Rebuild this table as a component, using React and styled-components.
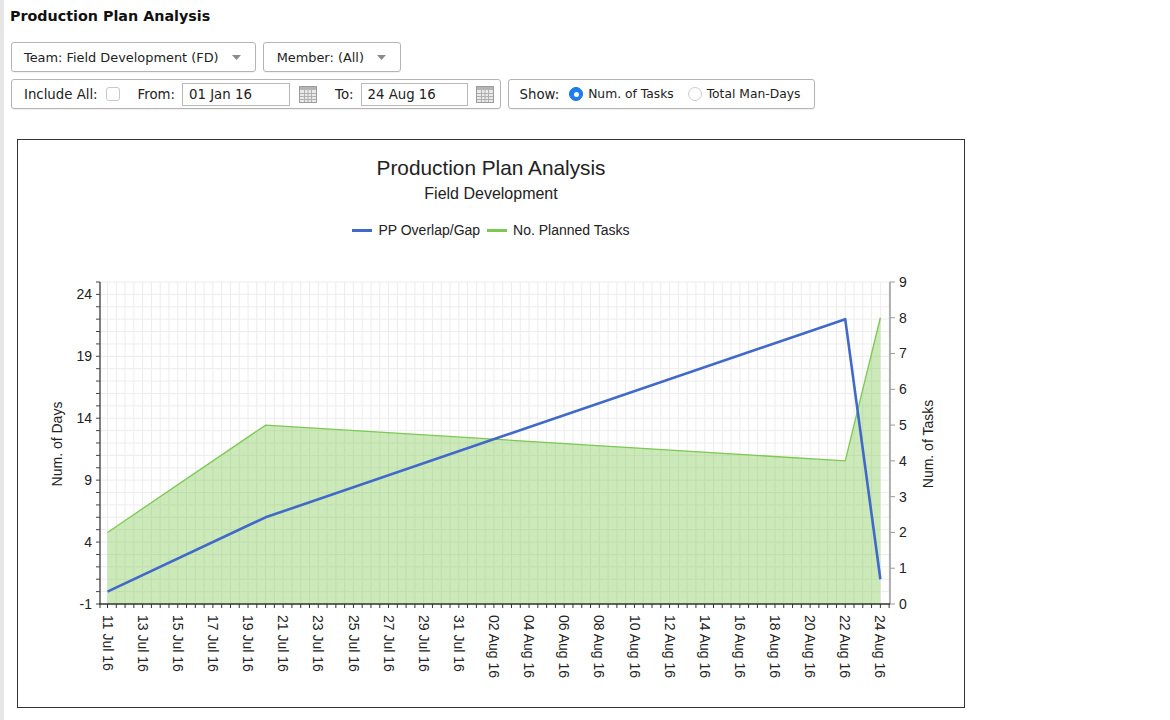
import styled, { createGlobalStyle } from 'styled-components';

const GlobalStyle = createGlobalStyle`
  html, body {
    margin: 0;
    padding: 0;
    background: #fff;
  }
  body {
    font-family: "DejaVu Sans", Verdana, sans-serif;
    color: #222;
  }
`;

const Page = styled.div`
  min-height: 720px;
  border-left: 4px solid #e6e6e6;
  padding: 8px 0 0 6px;
  box-sizing: border-box;
`;

const Heading = styled.h1`
  margin: 0;
  font-size: 14.3px;
  line-height: 16px;
  font-weight: bold;
  color: #111;
`;

const FilterRow = styled.div`
  display: flex;
  gap: 7px;
  margin-left: 1px;
  margin-top: ${(p) => p.$top}px;
`;

const FilterBox = styled.div`
  display: flex;
  align-items: center;
  height: 30px;
  box-sizing: border-box;
  padding: 0 ${(p) => p.$right ?? 14}px 0 ${(p) => p.$left ?? 12}px;
  border: 1px solid #b4b4b4;
  border-radius: 3px;
  box-shadow: 0 1px 1px rgba(0, 0, 0, 0.06);
  font-size: 13.3px;
  color: #222;
  white-space: nowrap;
`;

const Label = styled.span`
  margin-right: ${(p) => p.$gap ?? 0}px;
  font-size: ${(p) => p.$size ?? 13.3}px;
`;

const Caret = styled.svg`
  margin-left: 13px;
  flex: none;
`;

const Checkbox = styled.span`
  width: 12px;
  height: 12px;
  border: 1px solid #c9c9c9;
  border-radius: 3px;
  background: #fff;
  margin-right: 18px;
  flex: none;
`;

const DateInput = styled.div`
  display: flex;
  align-items: center;
  width: ${(p) => p.$width}px;
  height: 23px;
  box-sizing: border-box;
  border: 1px solid #b8b8b8;
  padding-left: 6px;
  margin-right: ${(p) => p.$gap}px;
  font-size: 13.3px;
  color: #222;
`;

const CalendarIcon = styled.svg`
  flex: none;
  margin-right: ${(p) => p.$gap}px;
`;

const Radio = styled.span`
  width: 14px;
  height: 14px;
  box-sizing: border-box;
  border-radius: 50%;
  flex: none;
  margin-right: 5px;
  display: flex;
  align-items: center;
  justify-content: center;
  background: ${(p) => (p.$checked ? '#1d7ef6' : '#fff')};
  border: 1px solid ${(p) => (p.$checked ? '#1a72e0' : '#cdcdcd')};

  &::after {
    content: '';
    width: 5px;
    height: 5px;
    border-radius: 50%;
    background: #fff;
    display: ${(p) => (p.$checked ? 'block' : 'none')};
  }
`;

const ChartFrame = styled.div`
  margin: 30px 0 0 7px;
  width: 948px;
  height: 569px;
  box-sizing: border-box;
  border: 1px solid #333;
  font-family: "Liberation Sans", Arial, sans-serif;
  color: #222;
`;

const ChartTitle = styled.div`
  padding-top: 16px;
  text-align: center;
  font-size: 20.8px;
  line-height: 24px;
  color: #222;
`;

const ChartSubtitle = styled.div`
  margin-top: 5px;
  text-align: center;
  font-size: 16px;
  line-height: 18px;
  color: #222;
`;

const Legend = styled.div`
  margin-top: 18px;
  display: flex;
  justify-content: center;
  gap: 7px;
  font-size: 14px;
  line-height: 18px;
`;

const LegendItem = styled.div`
  display: flex;
  align-items: center;
  gap: 6px;
`;

const Swatch = styled.span`
  width: 20px;
  height: 3px;
  background: ${(p) => p.$color};
`;

const Plot = styled.svg`
  display: block;
  font-family: "Liberation Sans", Arial, sans-serif;
`;

const BLUE = '#4169c9';
const GREEN = '#7cc850';

const X0 = 107.5;
const DX = 17.565;
const LEFT = 100;
const RIGHT = 890;
const TOP = 282;
const BOTTOM = 604;

const xs = (d) => X0 + d * DX;
const yL = (v) => BOTTOM - (v + 1) * 12.385;
const yR = (v) => BOTTOM - v * 35.78;

const gapSeries = [[0, 0], [9, 6], [42, 22], [44, 1]];
const taskSeries = [[0, 2], [9, 5], [42, 4], [44, 8]];

const dateLabel = (d) => {
  const dt = new Date(2016, 6, 11 + d);
  const months = ['Jan', 'Feb', 'Mar', 'Apr', 'May', 'Jun', 'Jul', 'Aug', 'Sep', 'Oct', 'Nov', 'Dec'];
  return `${String(dt.getDate()).padStart(2, '0')} ${months[dt.getMonth()]} 16`;
};

const range = (n) => Array.from({ length: n }, (_, i) => i);

function Chart() {
  const halfDays = range(90).map((i) => xs(i / 2)).filter((x) => x <= RIGHT);
  const leftUnits = range(27).map((i) => i - 1);
  const linePts = gapSeries.map(([d, v]) => `${xs(d)},${yL(v)}`).join(' ');
  const taskPts = taskSeries.map(([d, v]) => `${xs(d)},${yR(v)}`).join(' ');
  const areaPts = `${xs(0)},${BOTTOM} ${taskPts} ${xs(44)},${BOTTOM}`;

  return (
    <Plot width="946" height="468" viewBox="18 239 946 468">
      {/* grid */}
      {halfDays.map((x) => (
        <line key={`gx${x}`} x1={x} x2={x} y1={TOP} y2={BOTTOM} stroke="#ececec" strokeWidth="1" />
      ))}
      {leftUnits.map((v) => (
        <line key={`gy${v}`} x1={LEFT} x2={RIGHT} y1={yL(v)} y2={yL(v)} stroke="#ececec" strokeWidth="1" />
      ))}

      {/* series */}
      <polygon points={areaPts} fill={GREEN} fillOpacity="0.4" />
      <polyline points={taskPts} fill="none" stroke={GREEN} strokeWidth="1.3" />
      <polyline points={linePts} fill="none" stroke={BLUE} strokeWidth="2.6" strokeLinejoin="round" />

      {/* left axis */}
      <line x1={LEFT} x2={LEFT} y1={TOP} y2={BOTTOM} stroke="#555" strokeWidth="1.5" />
      {leftUnits.map((v) => (
        <line key={`lt${v}`} x1={LEFT - 4} x2={LEFT} y1={yL(v)} y2={yL(v)} stroke="#444" strokeWidth="1" />
      ))}
      {[-1, 4, 9, 14, 19, 24].map((v) => (
        <text key={`ll${v}`} x="92" y={yL(v)} dy="0.35em" textAnchor="end" fontSize="14" fill="#222">
          {v}
        </text>
      ))}
      <text transform="translate(57,444) rotate(-90)" dy="0.35em" textAnchor="middle" fontSize="14" fill="#222">
        Num. of Days
      </text>

      {/* right axis */}
      <line x1={RIGHT} x2={RIGHT} y1={TOP} y2={BOTTOM} stroke="#9a9a9a" strokeWidth="1.5" />
      {range(10).map((v) => (
        <g key={`r${v}`}>
          <line x1={RIGHT} x2={RIGHT + 5} y1={yR(v)} y2={yR(v)} stroke="#9a9a9a" strokeWidth="1" />
          <text x={RIGHT + 9} y={yR(v)} dy="0.35em" fontSize="14" fill="#222">
            {v}
          </text>
        </g>
      ))}
      <text transform="translate(928,444) rotate(-90)" dy="0.35em" textAnchor="middle" fontSize="14" fill="#222">
        Num. of Tasks
      </text>

      {/* bottom axis */}
      <line x1={LEFT - 1} x2={RIGHT} y1={BOTTOM} y2={BOTTOM} stroke="#333" strokeWidth="1.5" />
      {[LEFT, ...halfDays].map((x, i) => (
        <line key={`bt${i}`} x1={x} x2={x} y1={BOTTOM} y2={BOTTOM + 4} stroke="#333" strokeWidth="1" />
      ))}
      {range(23).map((i) => (
        <text
          key={`bl${i}`}
          transform={`translate(${xs(i * 2)},615) rotate(90)`}
          dy="0.35em"
          fontSize="14"
          fill="#222"
        >
          {dateLabel(i * 2)}
        </text>
      ))}
    </Plot>
  );
}

const CaretIcon = () => (
  <Caret width="9" height="5" viewBox="0 0 9 5">
    <path d="M0 0 L9 0 L4.5 5 Z" fill="#8a8a8a" />
  </Caret>
);

const Calendar = ({ gap }) => (
  <CalendarIcon $gap={gap} width="18" height="17" viewBox="0 0 18 17">
    <rect x="0.5" y="0.5" width="17" height="16" fill="#e9e9e9" stroke="#9c9c9c" />
    <rect x="1" y="1" width="16" height="3" fill="#b5b5b5" />
    {[5.5, 9, 12.5].map((x) => (
      <line key={`v${x}`} x1={x} x2={x} y1="4" y2="16" stroke="#b0b0b0" strokeWidth="1" />
    ))}
    {[7.5, 10.5, 13.5].map((y) => (
      <line key={`h${y}`} x1="1" x2="17" y1={y} y2={y} stroke="#b0b0b0" strokeWidth="1" />
    ))}
  </CalendarIcon>
);

export default function App() {
  return (
    <>
      <GlobalStyle />
      <Page>
        <Heading>Production Plan Analysis</Heading>

        <FilterRow $top={18}>
          <FilterBox $left={12} $right={14}>
            <Label $size={12.9}>Team: Field Development (FD)</Label>
            <CaretIcon />
          </FilterBox>
          <FilterBox $left={13} $right={14}>
            <Label $size={12.9}>Member: (All)</Label>
            <CaretIcon />
          </FilterBox>
        </FilterRow>

        <FilterRow $top={7}>
          <FilterBox $left={12} $right={6}>
            <Label $gap={8}>Include All:</Label>
            <Checkbox />
            <Label $gap={7}>From:</Label>
            <DateInput $width={108} $gap={9}>01 Jan 16</DateInput>
            <Calendar gap={18} />
            <Label $gap={7}>To:</Label>
            <DateInput $width={107} $gap={8}>24 Aug 16</DateInput>
            <Calendar gap={0} />
          </FilterBox>
          <FilterBox $left={11} $right={14}>
            <Label $gap={10}>Show:</Label>
            <Radio $checked />
            <Label $size={12.3} $gap={14}>Num. of Tasks</Label>
            <Radio />
            <Label $size={12.3}>Total Man-Days</Label>
          </FilterBox>
        </FilterRow>

        <ChartFrame>
          <ChartTitle>Production Plan Analysis</ChartTitle>
          <ChartSubtitle>Field Development</ChartSubtitle>
          <Legend>
            <LegendItem>
              <Swatch $color={BLUE} />
              PP Overlap/Gap
            </LegendItem>
            <LegendItem>
              <Swatch $color={GREEN} />
              No. Planned Tasks
            </LegendItem>
          </Legend>
          <Chart />
        </ChartFrame>
      </Page>
    </>
  );
}
